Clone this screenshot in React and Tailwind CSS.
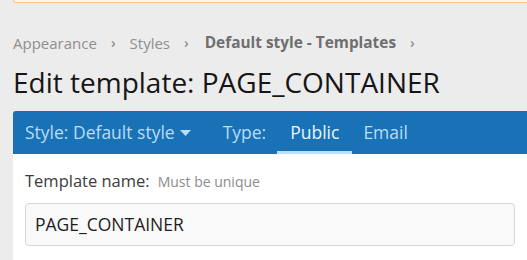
import React from 'react';

const crumbs = ['Appearance', 'Styles'];

const App = () => {
  return (
    <div className="h-[260px] overflow-hidden bg-[#ececec] pl-[13px] font-['Open_Sans',sans-serif]">
      <div className="h-[3px] rounded-bl-[3px] border-b border-l border-[#f2c98d] bg-[#fdf6e9]" />

      <div className="mt-[30px] flex items-center text-[15px] leading-[20px] text-[#8f8f8f]">
        {crumbs.map((c) => (
          <React.Fragment key={c}>
            <span>{c}</span>
            <span className="mx-[14px] text-[14px] font-semibold">&#x203A;</span>
          </React.Fragment>
        ))}
        <span className="ml-[2px] text-[15.4px] font-bold text-[#6f6f6f]">Default style - Templates</span>
        <span className="mx-[14px] text-[14px] font-semibold">&#x203A;</span>
      </div>

      <h1 className="mt-[11px] text-[28px] leading-[36px] text-[#161616]">Edit template: PAGE_CONTAINER</h1>

      <div className="mt-[11px] flex h-[43px] items-stretch rounded-tl-[3px] bg-[#1a72b6] pl-[12px] text-[17.5px] text-[#b9dcf7]">
        <div className="flex items-center">
          <span>Style: Default style</span>
          <svg width="11" height="6" viewBox="0 0 11 6" className="ml-[5px]">
            <path d="M0 0h11L5.5 6z" fill="#b9dcf7" />
          </svg>
        </div>
        <div className="ml-[32px] flex items-center">Type:</div>
        <div className="ml-[11px] flex items-center border-b-[3px] border-[#bfe0fa] px-[13px] pt-[3px] text-[#e9f5ff]">Public</div>
        <div className="flex items-center px-[11px]">Email</div>
      </div>

      <div className="bg-white px-[12px] pt-[15px] pb-[20px]">
        <div className="flex items-baseline gap-[8px]">
          <span className="text-[16.5px] text-[#3c3c3c]">Template name:</span>
          <span className="text-[14px] text-[#8c8c8c]">Must be unique</span>
        </div>
        <div className="mt-[9px] flex h-[43px] items-center rounded-[4px] border border-[#d6d6d6] bg-[#f9f9f9] px-[9px] text-[17.5px] text-[#1e1e1e]">
          PAGE_CONTAINER
        </div>
      </div>
    </div>
  );
};

export default App;
